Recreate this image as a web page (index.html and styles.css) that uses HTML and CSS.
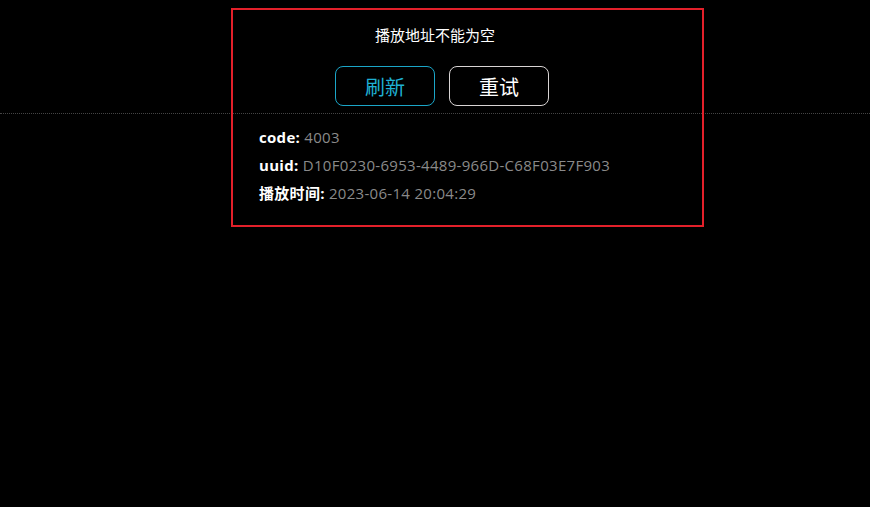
FILE: index.html
```html
<!DOCTYPE html>
<html lang="zh-CN">
<head>
<meta charset="utf-8">
<title>播放错误</title>
<link rel="stylesheet" href="styles.css">
</head>
<body>
<div class="stage">
  <div class="player-bar"></div>
  <div class="error-box">
    <div class="error-head">
      <div class="error-title">播放地址不能为空</div>
      <div class="error-actions">
        <button class="btn btn-refresh">刷新</button>
        <button class="btn btn-retry">重试</button>
      </div>
    </div>
    <ul class="error-info">
      <li><span class="label">code:</span> <span class="value">4003</span></li>
      <li><span class="label">uuid:</span> <span class="value">D10F0230-6953-4489-966D-C68F03E7F903</span></li>
      <li><span class="label">播放时间:</span> <span class="value">2023-06-14 20:04:29</span></li>
    </ul>
  </div>
</div>
</body>
</html>
```
FILE: styles.css
```css
html, body {
  margin: 0;
  padding: 0;
  background: #000;
  height: 100%;
}
body {
  font-family: "Open Sans", "Noto Sans CJK SC", sans-serif;
  color: #fff;
}
.stage {
  position: relative;
  width: 870px;
  height: 507px;
  overflow: hidden;
}
.player-bar {
  height: 113px;
  border-bottom: 1px dotted #444;
}
.error-box {
  position: absolute;
  left: 231px;
  top: 8px;
  width: 469px;
  height: 215px;
  border: 2px solid #e3202a;
}
.error-head {
  padding-right: 65px;
  text-align: center;
}
.error-title {
  padding-top: 15px;
  font-size: 15px;
  line-height: 20px;
  color: #fff;
}
.error-actions {
  margin-top: 21px;
  display: flex;
  justify-content: center;
}
.btn {
  box-sizing: border-box;
  width: 100px;
  height: 40px;
  margin-left: 14px;
  background: transparent;
  border-radius: 8px;
  font-family: "Noto Sans CJK SC", sans-serif;
  font-size: 20px;
  padding: 0;
  cursor: pointer;
}
.btn-refresh {
  border: 1px solid #1ba6c8;
  color: #1fb0d4;
}
.btn-retry {
  border: 1px solid #d8d4d4;
  color: #fff;
}
.error-info {
  list-style: none;
  margin: 17px 0 0;
  padding: 0 0 0 26px;
  font-size: 15px;
  letter-spacing: 0.3px;
  line-height: 28px;
}
.label {
  font-weight: bold;
  color: #fff;
}
.value {
  color: #8a8a8a;
}
```
